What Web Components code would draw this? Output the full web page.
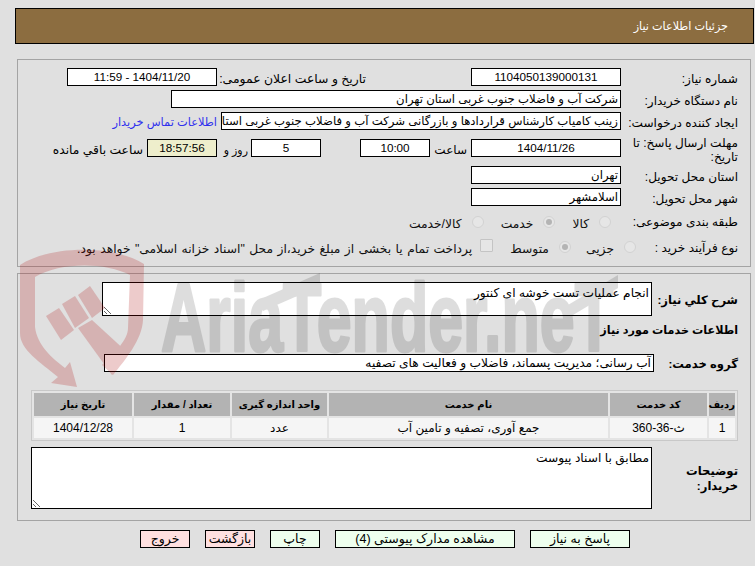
<!DOCTYPE html>
<html lang="fa" dir="rtl">
<head>
<meta charset="utf-8">
<title>جزئیات اطلاعات نیاز</title>
<style>
  html, body { margin: 0; height: 566px; overflow: hidden; }
  body { background: #e0e0e0; font: 12px "Liberation Sans", "DejaVu Sans", sans-serif; color: #000; position: relative; }
</style>
</head>
<body>
<need-page>
  <page-header>جزئیات اطلاعات نیاز</page-header>

  <form-panel style="--h:208px">
    <form-row label="شماره نیاز:" style="--top:8px">
      <text-box w="150" center>1104050139000131</text-box>
      <row-label style="width:144px;margin-right:105px;font-size:12.4px">تاریخ و ساعت اعلان عمومی:</row-label>
      <text-box w="150" center style="margin-right:5px">1404/11/20 - 11:59</text-box>
    </form-row>
    <form-row label="نام دستگاه خریدار:">
      <text-box w="450">شرکت آب و فاضلاب جنوب غربی استان تهران</text-box>
    </form-row>
    <form-row label="ایجاد کننده درخواست:">
      <text-box w="400">زینب کامیاب کارشناس قراردادها و بازرگانی شرکت آب و فاضلاب جنوب غربی استان تهران</text-box>
      <a-link>اطلاعات تماس خریدار</a-link>
    </form-row>
    <form-row label="مهلت ارسال پاسخ: تا<br>تاریخ:" style="--top:9px;--lt:-3px;--lh:14px">
      <text-box w="150" center>1404/11/26</text-box>
      <row-label style="width:33px;margin-right:4px">ساعت</row-label>
      <text-box w="70" center style="margin-right:4px">10:00</text-box>
      <text-box w="70" center style="margin-right:39px">5</text-box>
      <row-label style="width:23px;margin-right:3px;font-size:11px">روز و</row-label>
      <text-box w="70" center style="margin-right:8px;--bg:#eeeecc">18:57:56</text-box>
      <row-label style="width:90px;margin-right:4px;font-size:12.3px">ساعت باقي مانده</row-label>
    </form-row>
    <form-row label="استان محل تحویل:" style="--top:9px">
      <text-box w="150">تهران</text-box>
    </form-row>
    <form-row label="شهر محل تحویل:">
      <text-box w="150">اسلامشهر</text-box>
    </form-row>
    <form-row label="طبقه بندی موضوعی:" style="--top:7px;--lt:0px">
      <radio-item style="margin-right:10px">کالا</radio-item>
      <radio-item checked style="margin-right:17px">خدمت</radio-item>
      <radio-item style="margin-right:17px">کالا/خدمت</radio-item>
    </form-row>
    <form-row label="نوع فرآیند خرید :" style="--top:7px;--lt:1px">
      <radio-item style="margin-right:-15px">جزیی</radio-item>
      <radio-item checked style="margin-right:15px">متوسط</radio-item>
      <radio-item square style="margin-right:17px;gap:8px;word-spacing:1px">پرداخت تمام یا بخشی از مبلغ خرید،از محل "اسناد خزانه اسلامی" خواهد بود.</radio-item>
    </form-row>
  </form-panel>

  <form-panel style="--h:248px;margin-top:6px">
    <bold-row label="شرح کلي نیاز:" style="--top:8px">
      <note-box w="550" h="34">انجام عملیات تست خوشه ای کنتور</note-box>
    </bold-row>
    <section-title>اطلاعات خدمات مورد نیاز</section-title>
    <bold-row label="گروه خدمت:" style="--top:16px;--lw:96px">
      <text-box w="550" style="font-size:12.2px">آب رسانی؛ مدیریت پسماند، فاضلاب و فعالیت های تصفیه</text-box>
    </bold-row>
    <service-table></service-table>
    <bold-row label="توضیحات<br>خریدار:" style="--top:6px">
      <note-box w="621" h="62">مطابق با اسناد پیوست</note-box>
    </bold-row>
  </form-panel>

  <button-bar>
    <action-button>پاسخ به نیاز</action-button>
    <action-button wide>مشاهده مدارک پیوستی (4)</action-button>
    <action-button narrow>چاپ</action-button>
    <action-button danger>بازگشت</action-button>
    <action-button danger>خروج</action-button>
  </button-bar>

  <water-mark></water-mark>
</need-page>

<script>
// small helper: every element here is just styles + markup in an open shadow root
class Base extends HTMLElement {
  constructor() {
    super();
    this.attachShadow({ mode: 'open' });
  }
  connectedCallback() {
    this.shadowRoot.innerHTML = `<style>${this.getStyles()}</style>${this.getTemplate()}`;
  }
  getTemplate() { return '<slot></slot>'; }
  getStyles() { return ''; }
}

class NeedPage extends Base {
  getStyles() {
    return `
      :host { display: flex; flex-direction: column; position: relative; width: 755px; height: 566px; overflow: hidden;
        padding: 8px 1px 0 0; box-sizing: border-box; }
    `;
  }
}

// the logo lies over the whole page, the boxes and texts show through it
class WaterMark extends Base {
  getTemplate() {
    return `
      <svg width="755" height="566" viewBox="0 0 755 566">
        <g fill="#aa0000" opacity=".2">
          <path fill-rule="evenodd" d="M20 265 C50 245 115 245 144 264 L143 320 C142 340 125 360 113 375 L102 365 C115 352 128 340 128 328 L130 275 C105 262 60 262 35 277 L35 327 C37 345 52 358 65 368 L70 362 L77 387 L51 383 L58 377 C40 362 20 350 20 333 Z"/>
          <path d="M46 316 L59 308 L74 330 L61 340 Z"/>
          <path d="M62 304 L75 296 L89 318 L75 328 Z"/>
          <path d="M78 295 L90 286 L105 308 L92 318 Z"/>
          <path d="M78 328 L92 320 L128 353 L112 375 Z"/>
        </g>
        <g fill="#000" stroke="#000" stroke-width="3" stroke-linejoin="round" opacity=".13">
          <text x="161" y="351" textLength="452" lengthAdjust="spacingAndGlyphs" font-family="Liberation Sans" font-weight="700" font-size="96" direction="ltr" style="unicode-bidi:bidi-override">AriaTender.neT</text>
          <path stroke="none" d="M263 298 L320 273 L320 286 L263 311 Z"/>
          <path stroke="none" d="M563 308 L618 275 L618 288 L563 321 Z"/>
        </g>
      </svg>`;
  }
  getStyles() { return ':host { position: absolute; left: 0; top: 0; display: block; pointer-events: none; }'; }
}

class PageHeader extends Base {
  getStyles() {
    return `
      :host { display: flex; align-items: center; flex: none; height: 36px; width: 739px; box-sizing: border-box;
        border: 1px solid #000; background: #8c6d40; color: #fff; padding-right: 25px; font-size: 11.2px; }
    `;
  }
}

class FormPanel extends Base {
  getStyles() {
    return `
      :host { display: block; flex: none; height: var(--h); width: 734px; box-sizing: border-box; margin: 15px 3px 0 0;
        border: 1px solid #a4a4a4; }
    `;
  }
}

class FormRow extends Base {
  getTemplate() {
    return `<div class="lab">${this.getAttribute('label')}</div><div class="body"><slot></slot></div>`;
  }
  getStyles() {
    return `
      :host { display: flex; height: 18px; margin-top: var(--top, 4px); align-items: flex-start; }
      .lab { width: 121px; box-sizing: border-box; padding-right: 12px; flex: none; font-size: 12.1px; white-space: nowrap;
        line-height: var(--lh, 18px); margin-top: var(--lt, 2px); }
      .body { display: flex; align-items: flex-start; padding-right: 8px; }
    `;
  }
}

class BoldRow extends Base {
  getTemplate() {
    return `<div class="lab">${this.getAttribute('label')}</div><div class="body"><slot></slot></div>`;
  }
  getStyles() {
    return `
      :host { display: flex; margin-top: var(--top, 4px); align-items: center; }
      .lab { width: var(--lw, 98px); padding-right: 12px; box-sizing: border-box; flex: none; font-weight: 700; font-size: 11.6px; line-height: 15px; white-space: nowrap; }
      .body { display: flex; align-items: flex-start; }
    `;
  }
}

class RowLabel extends Base {
  getStyles() { return ':host { display: block; flex: none; white-space: nowrap; font-size: 12px; line-height: 18px; margin-top: 2px; }'; }
}

class TextBox extends Base {
  connectedCallback() {
    this.style.setProperty('--w', this.getAttribute('w') + 'px');
    this.style.setProperty('--al', this.hasAttribute('center') ? 'center' : 'right');
    super.connectedCallback();
  }
  getStyles() {
    return `
      :host { display: block; flex: none; width: var(--w); height: 18px; box-sizing: border-box; border: 1px solid #000;
        background: var(--bg, #fff); text-align: var(--al); line-height: 16px; padding: 0 2px; overflow: hidden; white-space: nowrap; font-size: 11.7px; }
    `;
  }
}

class ALink extends Base {
  getStyles() { return ':host { display: block; flex: none; margin: 1px 4px 0 0; color: #3030ee; white-space: nowrap; font-size: 11.4px; line-height: 18px; }'; }
}

class RadioItem extends Base {
  getTemplate() {
    const cls = this.hasAttribute('square') ? 'box' : 'dot';
    const on = this.hasAttribute('checked') ? ' on' : '';
    return `<span class="${cls}${on}"></span><span class="txt"><slot></slot></span>`;
  }
  getStyles() {
    return `
      :host { display: flex; align-items: flex-start; gap: 10px; white-space: nowrap; flex: none; color: #111; font-size: 12.3px; }
      .txt { line-height: 18px; margin-top: 2px; }
      .dot, .box { flex: none; width: 12px; height: 12px; box-sizing: border-box; background: #e6e6e6; border: 1px solid #d2d2d2; position: relative; margin-top: 3px; }
      .dot { border-radius: 50%; }
      .box { border-radius: 1px; width: 13px; height: 13px; margin-top: 1px; border-color: #c4c4c4; }
      .on::after { content: ''; position: absolute; inset: 2px; border-radius: 50%; background: #b4b4b4; }
    `;
  }
}

class NoteBox extends Base {
  connectedCallback() {
    this.style.setProperty('--w', this.getAttribute('w') + 'px');
    this.style.setProperty('--bh', this.getAttribute('h') + 'px');
    super.connectedCallback();
  }
  getStyles() {
    return `
      :host { display: block; flex: none; width: var(--w); height: var(--bh); box-sizing: border-box; border: 1px solid #000;
        background: #fff; padding: 3px 2px 0; line-height: 15px; overflow: auto; resize: both; font-size: 12.2px; }
    `;
  }
}

class SectionTitle extends Base {
  getStyles() {
    return ':host { display: block; font-weight: 700; font-size: 11.2px; padding-right: 12px; margin-top: 6px; line-height: 16px; }';
  }
}

class ServiceTable extends Base {
  getTemplate() {
    const cols = [
      ['ردیف', '1'], ['کد خدمت', 'ث-36-360'], ['نام خدمت', 'جمع آوری، تصفیه و تامین آب'],
      ['واحد اندازه گیری', 'عدد'], ['تعداد / مقدار', '1'], ['تاریخ نیاز', '1404/12/28']
    ];
    return `<table>
      <tr>${cols.map(c => `<th>${c[0]}</th>`).join('')}</tr>
      <tr>${cols.map(c => `<td>${c[1]}</td>`).join('')}</tr>
    </table>`;
  }
  getStyles() {
    return `
      :host { display: block; margin: 18px 12px 0 13px; }
      table { width: 707px; table-layout: fixed; border-collapse: separate; border-spacing: 2px; border: 1px solid #c8c8c8; background: #e4e4e4; }
      th { background: #b3b3b3; height: 23px; padding: 0; font-weight: 700; font-size: 10px; }
      td { background: #f5f5f5; height: 20px; padding: 0; text-align: center; font-size: 12px; }
      th:nth-child(1) { width: 26px; }
      th:nth-child(2) { width: 97px; }
      th:nth-child(3) { width: 279px; }
      th:nth-child(4) { width: 95px; }
      th:nth-child(5) { width: 96px; }
    `;
  }
}

class ButtonBar extends Base {
  getStyles() {
    return ':host { display: flex; flex: none; gap: 15px; margin-top: 9px; padding-right: 124px; height: 18px; }';
  }
}

class ActionButton extends Base {
  getStyles() {
    return `
      :host { display: block; flex: none; width: 100px; height: 18px; box-sizing: border-box; border: 1px solid #000; background: #eeffee; text-align: center; line-height: 17px; white-space: nowrap; font-size: 12.5px; }
      :host([wide]) { width: 180px; }
      :host([narrow]) { width: 50px; }
      :host([danger]) { width: 50px; background: #ffe0e0; }
    `;
  }
}

customElements.define('need-page', NeedPage);
customElements.define('water-mark', WaterMark);
customElements.define('page-header', PageHeader);
customElements.define('form-panel', FormPanel);
customElements.define('form-row', FormRow);
customElements.define('bold-row', BoldRow);
customElements.define('row-label', RowLabel);
customElements.define('text-box', TextBox);
customElements.define('a-link', ALink);
customElements.define('radio-item', RadioItem);
customElements.define('note-box', NoteBox);
customElements.define('section-title', SectionTitle);
customElements.define('service-table', ServiceTable);
customElements.define('button-bar', ButtonBar);
customElements.define('action-button', ActionButton);
</script>
</body>
</html>
